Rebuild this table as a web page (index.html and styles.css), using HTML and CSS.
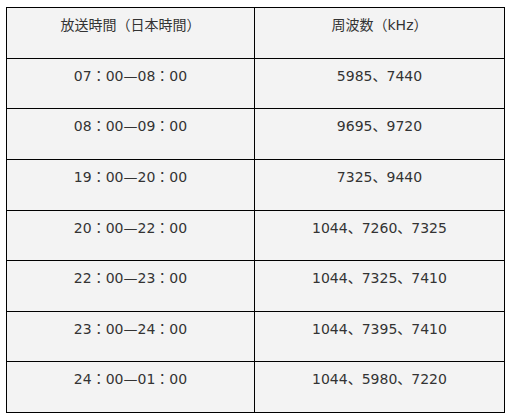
FILE: index.html
```html
<!DOCTYPE html>
<html lang="ja">
<head>
<meta charset="utf-8">
<link rel="stylesheet" href="styles.css">
</head>
<body>
<div class="page">
<table class="schedule">
<colgroup><col class="c1"><col class="c2"></colgroup>
<tr><td>放送時間（日本時間）</td><td>周波数（kHz）</td></tr>
<tr><td>07：00—08：00</td><td>5985、7440</td></tr>
<tr><td>08：00—09：00</td><td>9695、9720</td></tr>
<tr><td>19：00—20：00</td><td>7325、9440</td></tr>
<tr><td>20：00—22：00</td><td>1044、7260、7325</td></tr>
<tr><td>22：00—23：00</td><td>1044、7325、7410</td></tr>
<tr><td>23：00—24：00</td><td>1044、7395、7410</td></tr>
<tr><td>24：00—01：00</td><td>1044、5980、7220</td></tr>
</table>
</div>
</body>
</html>
```
FILE: styles.css
```css
html, body { margin: 0; padding: 0; background: #fff; }
.page { padding: 7px 0 0 6px; }
.schedule {
  border-collapse: collapse;
  table-layout: fixed;
  width: 498px;
  height: 406px;
  font-family: "DejaVu Sans", "Noto Sans CJK JP", sans-serif;
  font-size: 14px;
  color: #333;
}
.c1 { width: 248px; }
.c2 { width: 250px; }
.schedule td {
  border: 1px solid #000;
  background: #f3f3f3;
  text-align: center;
  vertical-align: top;
  padding: 8px 0 0;
  line-height: 18px;
}
```
